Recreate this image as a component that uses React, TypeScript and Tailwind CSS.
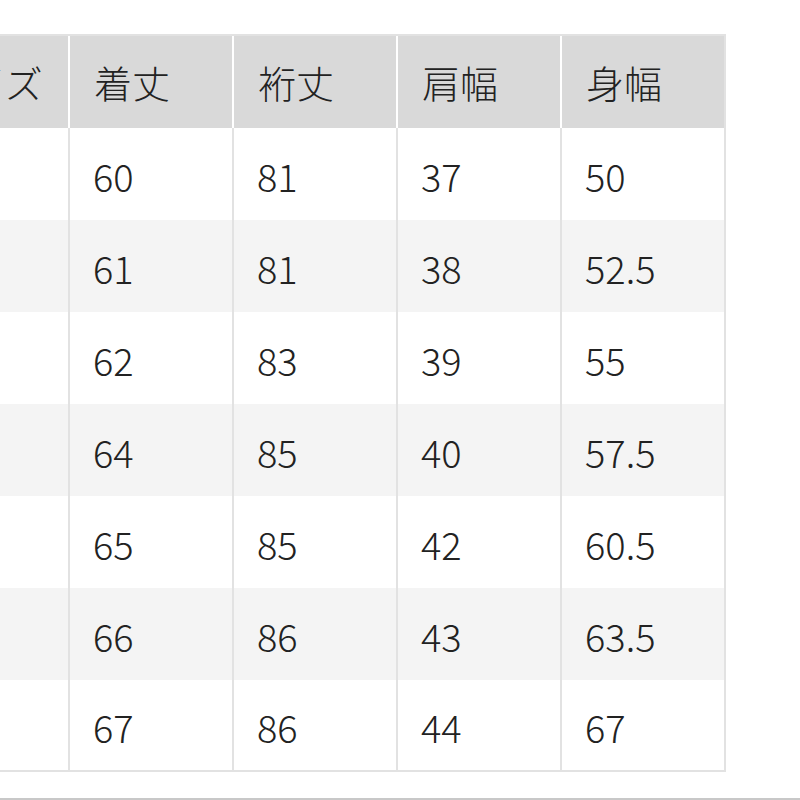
import React from "react";

const headers = ["サイズ", "着丈", "裄丈", "肩幅", "身幅"];
const rows = [
  ["60", "81", "37", "50"],
  ["61", "81", "38", "52.5"],
  ["62", "83", "39", "55"],
  ["64", "85", "40", "57.5"],
  ["65", "85", "42", "60.5"],
  ["66", "86", "43", "63.5"],
  ["67", "86", "44", "67"],
];

export default function App() {
  return (
    <div
      className="w-[800px] h-[800px] overflow-hidden bg-white flex flex-col text-[#222]"
      style={{ fontFamily: '"Noto Sans CJK JP", "Noto Sans", sans-serif' }}
    >
      <div className="pt-[34px] ml-[-94px]">
        <div className="w-[820px] border-t-2 border-r-2 border-[#e2e2e2]">
          <div className="grid grid-cols-[164px_164px_164px_164px_162px] h-[92px] bg-[#d9d9d9]">
            {headers.map((h, i) => (
              <div
                key={h}
                className={`flex items-center pl-[24px] text-[38px] font-light leading-none ${
                  i < headers.length - 1 ? "border-r-2 border-white" : ""
                }`}
              >
                {h}
              </div>
            ))}
          </div>
          {rows.map((r, ri) => (
            <div
              key={ri}
              className={`grid grid-cols-[164px_164px_164px_164px_162px] h-[92px] ${
                ri % 2 === 1 ? "bg-[#f4f4f4]" : "bg-white"
              } ${ri === rows.length - 1 ? "border-b-2 border-[#e2e2e2] h-[90px]" : ""}`}
            >
              <div className="border-r-2 border-[#e2e2e2]" />
              {r.map((v, ci) => (
                <div
                  key={ci}
                  className={`flex items-center pl-[23px] pt-[4px] text-[38px] font-light leading-none ${
                    ci < r.length - 1 ? "border-r-2 border-[#e2e2e2]" : ""
                  }`}
                >
                  {v}
                </div>
              ))}
            </div>
          ))}
        </div>
      </div>
      <div className="mt-auto h-[2px] bg-[#c8c8c8]" />
    </div>
  );
}
